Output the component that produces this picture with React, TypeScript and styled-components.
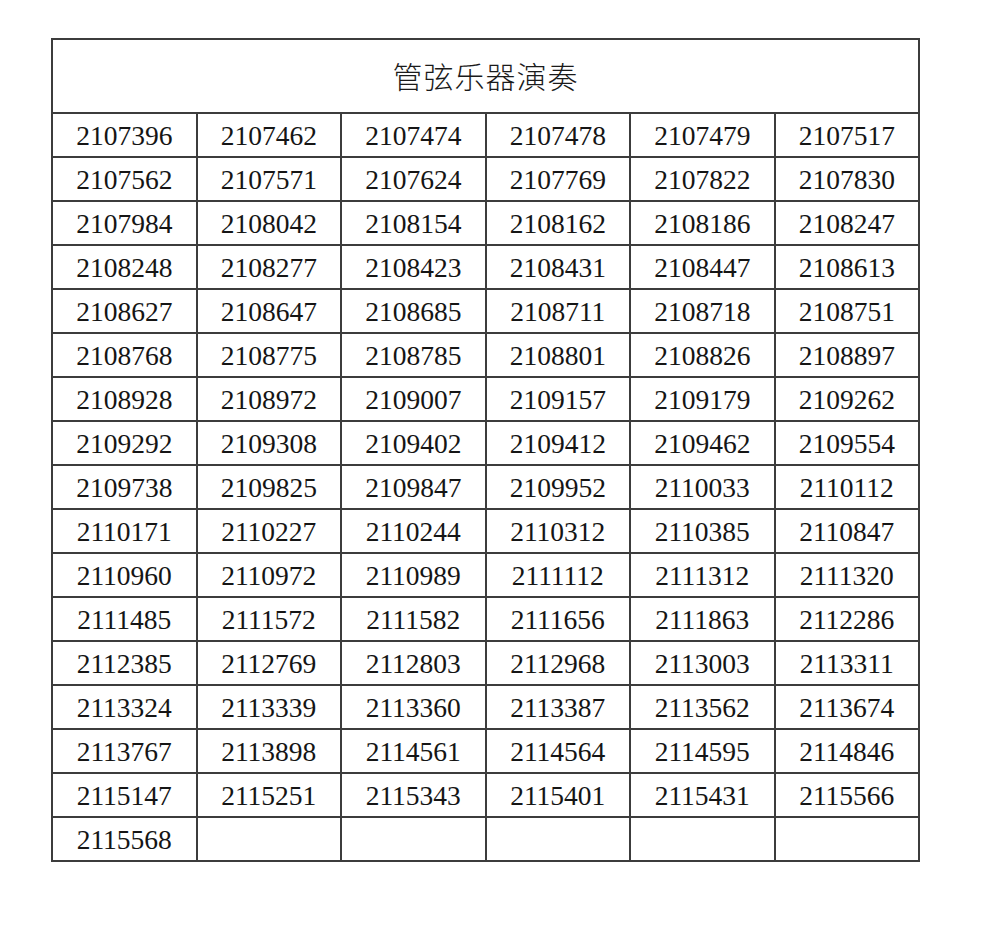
import * as React from "react";
import styled, { createGlobalStyle } from "styled-components";

const GlobalStyle = createGlobalStyle`
  html, body {
    margin: 0;
    padding: 0;
    background: #ffffff;
  }
`;

const Page = styled.div`
  padding: 38px 0 0 51px;
`;

const Sheet = styled.div`
  width: 869px;
  box-sizing: border-box;
  display: grid;
  grid-template-columns: repeat(6, 1fr);
  border-left: 2px solid #3c3c3c;
  border-top: 2px solid #3c3c3c;
`;

const Title = styled.div`
  grid-column: 1 / -1;
  height: 74px;
  box-sizing: border-box;
  border-right: 2px solid #3c3c3c;
  border-bottom: 2px solid #3c3c3c;
  display: flex;
  align-items: center;
  justify-content: center;
  padding-bottom: 2px;
  font-family: "Noto Sans CJK SC", "Noto Sans", sans-serif;
  font-size: 30px;
  font-weight: 300;
  letter-spacing: 1px;
  color: #1a1a1a;
`;

const Cell = styled.div`
  height: 44px;
  box-sizing: border-box;
  border-right: 2px solid #3c3c3c;
  border-bottom: 2px solid #3c3c3c;
  display: flex;
  align-items: center;
  justify-content: center;
  font-family: "Liberation Serif", "Times New Roman", serif;
  font-size: 27.5px;
  color: #151515;
  padding-top: 1px;
`;

const numbers = [
  "2107396", "2107462", "2107474", "2107478", "2107479", "2107517",
  "2107562", "2107571", "2107624", "2107769", "2107822", "2107830",
  "2107984", "2108042", "2108154", "2108162", "2108186", "2108247",
  "2108248", "2108277", "2108423", "2108431", "2108447", "2108613",
  "2108627", "2108647", "2108685", "2108711", "2108718", "2108751",
  "2108768", "2108775", "2108785", "2108801", "2108826", "2108897",
  "2108928", "2108972", "2109007", "2109157", "2109179", "2109262",
  "2109292", "2109308", "2109402", "2109412", "2109462", "2109554",
  "2109738", "2109825", "2109847", "2109952", "2110033", "2110112",
  "2110171", "2110227", "2110244", "2110312", "2110385", "2110847",
  "2110960", "2110972", "2110989", "2111112", "2111312", "2111320",
  "2111485", "2111572", "2111582", "2111656", "2111863", "2112286",
  "2112385", "2112769", "2112803", "2112968", "2113003", "2113311",
  "2113324", "2113339", "2113360", "2113387", "2113562", "2113674",
  "2113767", "2113898", "2114561", "2114564", "2114595", "2114846",
  "2115147", "2115251", "2115343", "2115401", "2115431", "2115566",
  "2115568", "", "", "", "", "",
];

const App = () => {
  return (
    <Page>
      <GlobalStyle />
      <Sheet>
        <Title>管弦乐器演奏</Title>
        {numbers.map((n, i) => (
          <Cell key={i}>{n}</Cell>
        ))}
      </Sheet>
    </Page>
  );
};

export default App;
